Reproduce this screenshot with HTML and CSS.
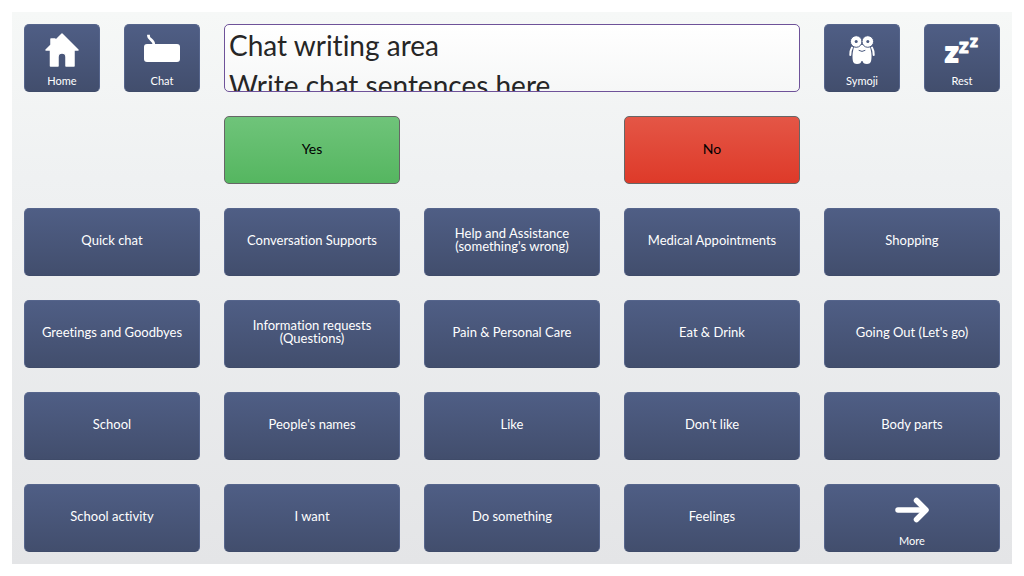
FILE: index.html
```
<!DOCTYPE html>
<html lang="en">
<head>
    <meta charset="UTF-8">
    <title>Chat</title>
    <link rel="stylesheet" href="styles.css">
</head>
<body>
    <main class="board">
        <button type="button" class="cell small">
            <svg class="icon" viewBox="0 0 40 36" aria-hidden="true">
                <path d="M20 2 L36 18 H32 V34 H24 V25 a4 4 0 0 0 -8 0 V34 H8.500 V18 H4 L9 13 V7 H13 V9 Z" fill="#fff" stroke="#fff" stroke-width="1.500" stroke-linejoin="round"/>
            </svg>
            <span>Home</span>
        </button>
        <button type="button" class="cell small">
            <svg class="icon" viewBox="0 0 40 36" aria-hidden="true">
                <path d="M6.500 2.800 V4 C6.500 8 11.800 7 11.800 13" fill="none" stroke="#fff" stroke-width="2.800"/>
                <rect x="2" y="12" width="36" height="18" rx="3" fill="#fff"/>
            </svg>
            <span>Chat</span>
        </button>
        <textarea class="writing" aria-label="Chat writing area">Chat writing area
Write chat sentences here</textarea>
        <button type="button" class="cell small">
            <svg class="icon" viewBox="0 0 40 36" aria-hidden="true">
                <path d="M12.500 13 H27.500 C28.500 17 29.500 20 29.500 24 C29.500 29 29 32 25 32 C22 32 21 31 20.500 29 H19.500 C19 31 18 32 15 32 C11 32 10.500 29 10.500 24 C10.500 20 11.500 17 12.500 13 Z" fill="#fff"/>
                <path d="M10 15.500 C8.500 18 8.300 20 8.300 23 M30 15.500 C31.500 18 31.700 20 31.700 23" fill="none" stroke="#fff" stroke-width="2" stroke-linecap="round"/>
                <circle cx="14.200" cy="9.500" r="5.800" fill="#fff" stroke="#4b5a80" stroke-width="1"/>
                <circle cx="25.800" cy="9.500" r="5.800" fill="#fff" stroke="#4b5a80" stroke-width="1"/>
                <circle cx="14.200" cy="9.500" r="1.500" fill="#4b5a80"/>
                <circle cx="25.800" cy="9.500" r="1.500" fill="#4b5a80"/>
                <path d="M17 18.500 Q20 20.500 23 18.500" fill="none" stroke="#4b5a80" stroke-linecap="round"/>
            </svg>
            <span>Symoji</span>
        </button>
        <button type="button" class="cell small">
            <svg class="icon zzz" viewBox="0 0 40 36" aria-hidden="true">
                <text x="3" y="30" font-size="29" stroke-width="2">z</text>
                <text x="17" y="21" font-size="21" stroke-width="1">z</text>
                <text x="28" y="15" font-size="17" stroke-width="1">z</text>
            </svg>
            <span>Rest</span>
        </button>

        <button type="button" class="cell yes">Yes</button>
        <button type="button" class="cell no">No</button>

        <button type="button" class="cell">Quick chat</button>
        <button type="button" class="cell">Conversation Supports</button>
        <button type="button" class="cell">Help and Assistance<br>(something's wrong)</button>
        <button type="button" class="cell">Medical Appointments</button>
        <button type="button" class="cell">Shopping</button>

        <button type="button" class="cell">Greetings and Goodbyes</button>
        <button type="button" class="cell">Information requests<br>(Questions)</button>
        <button type="button" class="cell">Pain &amp; Personal Care</button>
        <button type="button" class="cell">Eat &amp; Drink</button>
        <button type="button" class="cell">Going Out (Let's go)</button>

        <button type="button" class="cell">School</button>
        <button type="button" class="cell">People's names</button>
        <button type="button" class="cell">Like</button>
        <button type="button" class="cell">Don't like</button>
        <button type="button" class="cell">Body parts</button>

        <button type="button" class="cell">School activity</button>
        <button type="button" class="cell">I want</button>
        <button type="button" class="cell">Do something</button>
        <button type="button" class="cell">Feelings</button>
        <button type="button" class="cell more">
            <svg class="icon" viewBox="0 0 40 36" aria-hidden="true">
                <path d="M6 18 H33" fill="none" stroke="#fff" stroke-width="5.500" stroke-linecap="round"/>
                <path d="M24.500 8.500 L34 18 L24.500 27.500" fill="none" stroke="#fff" stroke-width="5.500" stroke-linecap="round" stroke-linejoin="round"/>
            </svg>
            <span>More</span>
        </button>
    </main>
</body>
</html>
```
FILE: styles.css
```
*{
    margin: 0;
    padding: 0;
    box-sizing: border-box;
}
body{
    min-height: 100vh;
    display: flex;
    padding: 12px;
    background: #fff;
    font-family: Lato, "Liberation Sans", sans-serif;
    font-variant-ligatures: none;
}
.board{
    flex: 1;
    display: grid;
    grid-template-columns: repeat(10, minmax(0, 1fr));
    grid-template-rows: repeat(6, minmax(68px, 1fr));
    gap: 24px;
    padding: 12px;
    background: linear-gradient(#f6f8f7, #eff1f2 30%, #e4e5e7);
}
.cell{
    grid-column: span 2;
    padding: 0 4px 4px;
    border: 1px solid #56658c;
    border-bottom-color: #3f4b69;
    border-radius: 5px;
    background: linear-gradient(#4f5e85, #424e6d);
    color: #fff;
    font-family: inherit;
    font-variant-ligatures: inherit;
    font-size: 13px;
    line-height: 13px;
    cursor: pointer;
}
.small,
.more{
    display: flex;
    flex-direction: column;
    align-items: center;
    justify-content: center;
    gap: 6px;
    padding: 4px 0 2px;
    font-size: 11px;
}
.small{
    grid-column: span 1;
}
.icon{
    width: 40px;
    height: 36px;
}
.zzz text{
    fill: #fff;
    stroke: #fff;
    stroke-linejoin: round;
    font-weight: 900;
}
/* fills its row without making it taller, the second line is cut off */
.writing{
    grid-column: span 6;
    height: 0;
    min-width: 0;
    min-height: 100%;
    padding: 0 4px;
    border: 1px solid #6e5299;
    border-radius: 5px;
    background: linear-gradient(#fff, #f6f7f7);
    color: #262626;
    font-family: inherit;
    font-variant-ligatures: inherit;
    font-size: 28px;
    line-height: 40px;
    overflow: hidden;
    resize: none;
}
.yes,
.no{
    border-color: #666;
    color: #000;
    font-size: 14px;
}
.yes{
    grid-column: 3 / span 2;
    background: linear-gradient(#6fc47a, #55b660);
}
.no{
    grid-column: 7 / span 2;
    background: linear-gradient(#e45646, #de3a29);
}
/* first tile of the topics starts a new row */
.no + .cell{
    grid-column: 1 / span 2;
}
```
